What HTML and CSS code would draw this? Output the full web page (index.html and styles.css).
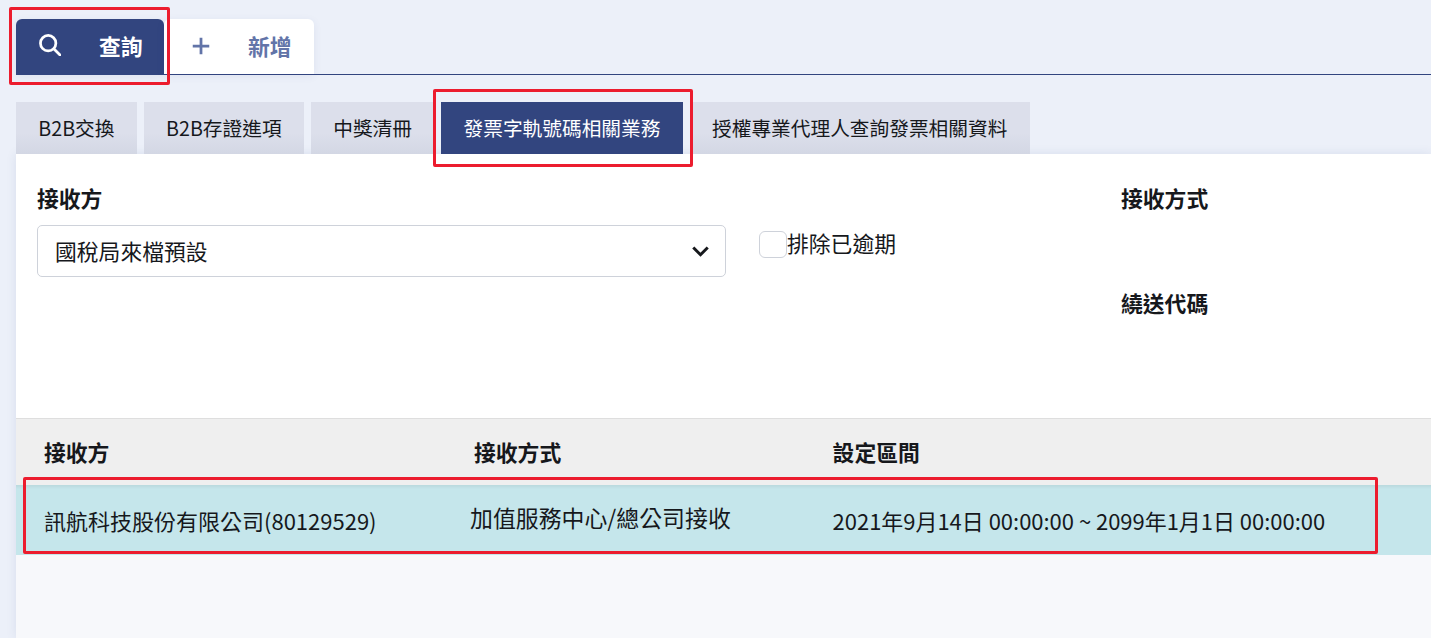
FILE: index.html
```html
<!DOCTYPE html>
<html lang="zh-Hant">
<head>
    <meta charset="UTF-8">
    <meta name="viewport" content="width=device-width, initial-scale=1.0">
    <title>查詢</title>
    <link rel="stylesheet" href="styles.css">
</head>
<body>
    <div class="main-tabs">
        <div class="main-tab active">
            <svg class="tab-icon" viewBox="0 0 24 24" fill="none" stroke="currentColor" stroke-width="3" stroke-linecap="round"><circle cx="10" cy="10" r="8.4"/><path d="M16.4 16.4 L23 23"/></svg>
            <span>查詢</span>
        </div>
        <div class="main-tab">
            <svg class="tab-icon" viewBox="0 0 24 24" fill="none" stroke="currentColor" stroke-width="3"><path d="M12 3 V21 M3 12 H21"/></svg>
            <span>新增</span>
        </div>
    </div>

    <div class="sub-tabs">
        <div class="sub-tab">B2B交換</div>
        <div class="sub-tab">B2B存證進項</div>
        <div class="sub-tab">中獎清冊</div>
        <div class="sub-tab active">發票字軌號碼相關業務</div>
        <div class="sub-tab">授權專業代理人查詢發票相關資料</div>
    </div>

    <div class="panel">
        <div class="form-area">
            <div class="form-left">
                <label class="field-label">接收方</label>
                <div class="select-box">
                    <span>國稅局來檔預設</span>
                    <svg class="chevron" viewBox="0 0 16 10" fill="none" stroke="#16181c" stroke-width="2.8"><path d="M1.2 1.2 L8 8 L14.8 1.2"/></svg>
                </div>
            </div>
            <div class="check-field">
                <span class="checkbox"></span>
                <span>排除已逾期</span>
            </div>
            <div class="form-right">
                <label class="field-label">接收方式</label>
                <label class="field-label">繞送代碼</label>
            </div>
        </div>

        <div class="table-head">
            <div class="col-a">接收方</div>
            <div class="col-b">接收方式</div>
            <div class="col-c">設定區間</div>
        </div>
        <div class="table-row">
            <div class="col-a">訊航科技股份有限公司(80129529)</div>
            <div class="col-b raised">加值服務中心/總公司接收</div>
            <div class="col-c">2021年9月14日 00:00:00 ~ 2099年1月1日 00:00:00</div>
        </div>
        <div class="table-empty"></div>
    </div>

    <!-- 紅框標註 -->
    <div class="mark mark-tab"></div>
    <div class="mark mark-subtab"></div>
    <div class="mark mark-row"></div>
</body>
</html>
```

FILE: styles.css
```css
* { margin: 0; padding: 0; box-sizing: border-box; }
html, body { height: 100%; overflow: hidden; }
body { position: relative; background: #ecf0f9; padding: 19px 0 0 16px; font-family: "Noto Sans CJK TC", "Noto Sans", sans-serif; font-size: 21.8px; color: #16181c; }

/* Main tabs */
.main-tabs { display: flex; height: 56px; border-bottom: 1px solid #32457f; }
.main-tab { display: flex; align-items: center; width: 150px; height: 55px; background: white; color: #6274a8; font-weight: 700; border-radius: 6px 6px 0 0; box-shadow: 0 2px 8px rgba(50, 69, 127, 0.08); }
.main-tab.active { width: 148px; height: 56px; background: #32457f; color: white; }
.main-tab span { margin: -3px 0 0 36px; }
.main-tab.active span { margin-left: 38px; }
.tab-icon { width: 22px; height: 22px; margin-left: 23px; margin-top: -5px; flex-shrink: 0; }
.main-tab:not(.active) .tab-icon { margin-left: 26px; margin-top: -2px; }

/* Sub tabs */
.sub-tabs { display: flex; gap: 7px; height: 52px; margin-top: 27px; }
.sub-tab { display: flex; align-items: center; padding: 0 22.3px 2px; font-size: 19.7px; color: #16181c; background: linear-gradient(#dcdfeb 60%, #d3d7e4); white-space: nowrap; }
.sub-tab.active { background: #32457f; color: white; }

/* Panel */
.panel { display: flex; flex-direction: column; height: 484px; background: #f7f8fb; box-shadow: 0 0 10px rgba(50, 69, 127, 0.1); }
.form-area { display: flex; height: 265px; padding: 26px 0 0 21px; background: white; border-bottom: 1px solid #dedede; }
.form-left { width: 689px; }
.field-label { display: block; font-weight: 700; font-size: 21.8px; line-height: 36px; }
.select-box { display: flex; align-items: center; justify-content: space-between; height: 52px; margin-top: 9px; padding: 0 16px 2px 17px; background: white; border: 1px solid #ced2da; border-radius: 5px; }
.chevron { width: 17px; height: 11px; margin-top: 2px; }
.check-field { display: flex; align-items: flex-start; margin: 51px 0 0 33px; width: 362px; line-height: 24px; }
.checkbox { width: 28px; height: 27px; background: white; border: 1px solid #ced2da; border-radius: 6px; flex-shrink: 0; }
.form-right .field-label + .field-label { margin-top: 69px; }

/* Table */
.table-head, .table-row { display: flex; align-items: center; padding-left: 28px; }
.table-head { height: 66px; padding-bottom: 2px; background: #efefef; font-weight: 700; }
.table-row { height: 70px; background: #c5e6eb; font-size: 22px; box-shadow: inset 0 4px 3px -2px rgba(0, 0, 0, 0.06); }
.col-a { width: 430px; }
.col-b { width: 358.6px; }
.col-c { white-space: nowrap; }
.raised { margin: -7px 0 0 -4px; width: 362.6px; font-size: 22.9px; }
.table-row .col-c { font-size: 21.96px; }
.table-empty { flex: 1; }

/* 紅框標註 */
.mark { position: absolute; border: 3px solid #ec1c2e; border-radius: 2px; }
.mark-tab { left: 9px; top: 7px; width: 161px; height: 78px; }
.mark-subtab { left: 433px; top: 89px; width: 260px; height: 78px; }
.mark-row { left: 23px; top: 477px; width: 1355px; height: 77px; }
```
